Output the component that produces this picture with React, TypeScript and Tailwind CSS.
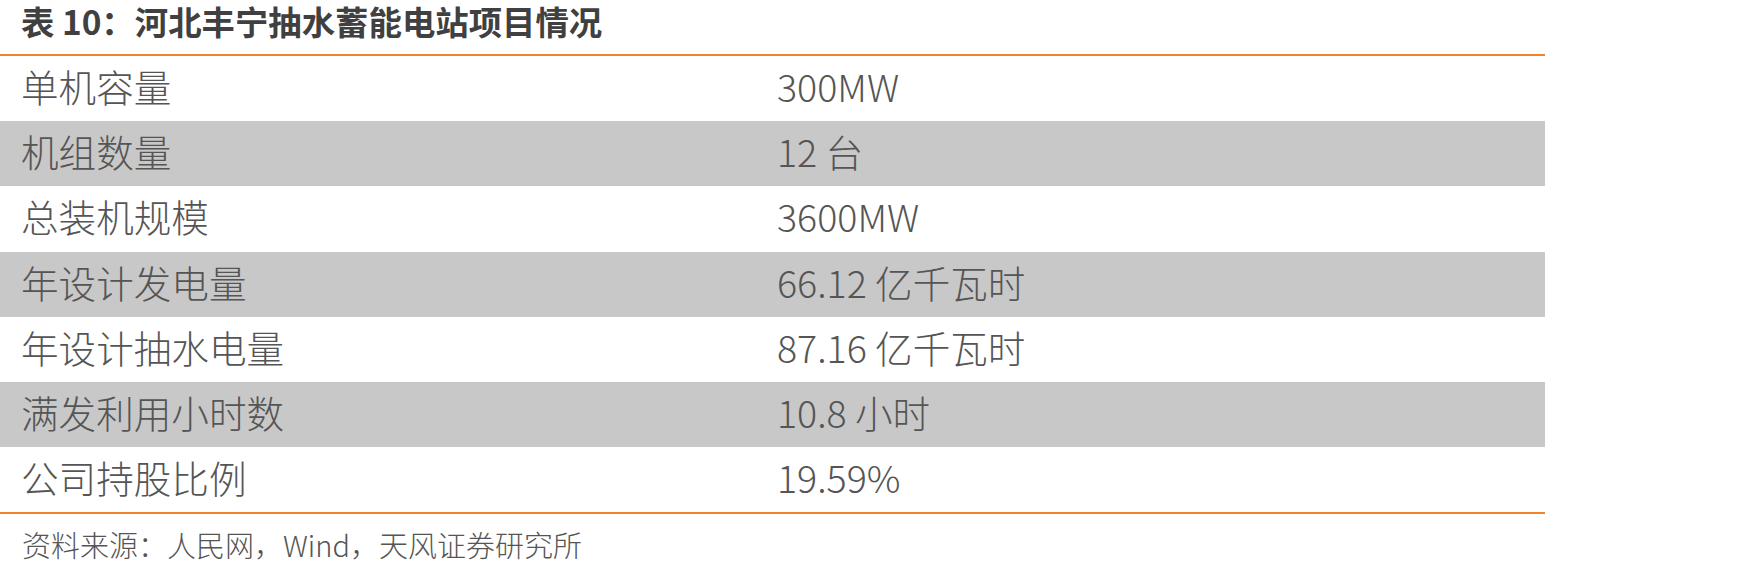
import React from "react";

const rows: [string, string][] = [
  ["单机容量", "300MW"],
  ["机组数量", "12 台"],
  ["总装机规模", "3600MW"],
  ["年设计发电量", "66.12 亿千瓦时"],
  ["年设计抽水电量", "87.16 亿千瓦时"],
  ["满发利用小时数", "10.8 小时"],
  ["公司持股比例", "19.59%"],
];

export default function App() {
  return (
    <div
      className="w-[1747px] h-[576px] bg-white overflow-hidden"
      style={{ fontFamily: '"Noto Sans CJK SC", sans-serif' }}
    >
      <div className="w-[1545px]">
        <div className="h-[54px] pl-[21px] pt-[1px] text-[33.4px] leading-[40px] font-bold text-[#404040]">
          表 10：河北丰宁抽水蓄能电站项目情况
        </div>
        <div className="border-t-2 border-b-2 border-[#f0842a]">
          {rows.map(([k, v], i) => (
            <div
              key={k}
              className={`grid grid-cols-[756px_1fr] h-[65.2px] items-center pb-[5px] text-[37.6px] leading-[44px] font-light text-[#555555] ${
                i % 2 === 1 ? "bg-[#c8c8c8]" : "bg-white"
              }`}
            >
              <div className="pl-[21px]">{k}</div>
              <div className="pl-[21px]">{v}</div>
            </div>
          ))}
        </div>
        <div className="pt-[12px] pl-[22px] text-[29px] leading-[36px] font-light text-[#555555]">
          资料来源：人民网，Wind，天风证券研究所
        </div>
      </div>
    </div>
  );
}
